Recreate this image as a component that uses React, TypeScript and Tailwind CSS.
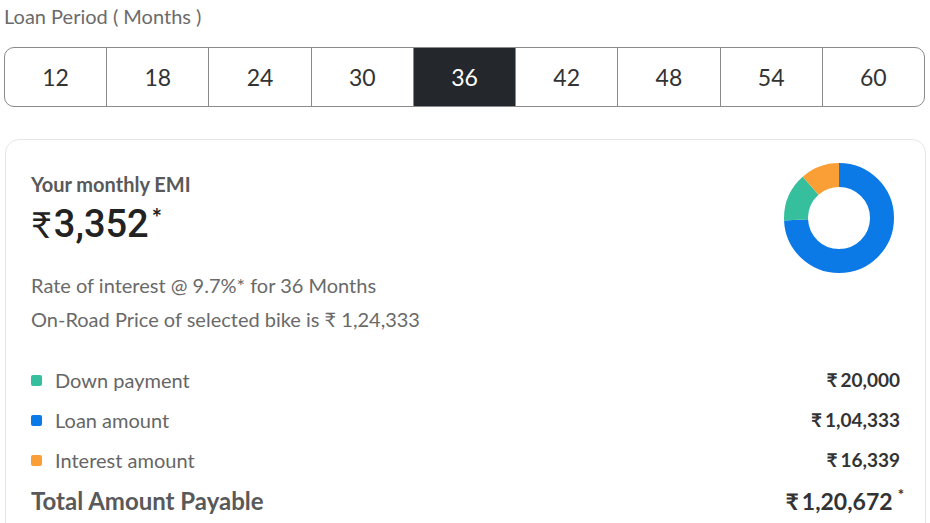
import React from "react";

const months = [12, 18, 24, 30, 36, 42, 48, 54, 60];

const breakdown = [
  { label: "Down payment", value: "20,000", color: "bg-[#35bf9c]" },
  { label: "Loan amount", value: "1,04,333", color: "bg-[#0b79e6]" },
  { label: "Interest amount", value: "16,339", color: "bg-[#fa9f36]" },
];

function Donut() {
  // slices: loan, down payment, interest (clockwise from top)
  const total = 20000 + 104333 + 16339;
  const parts = [
    { v: 104333, c: "#0b79e6" },
    { v: 20000, c: "#35bf9c" },
    { v: 16339, c: "#fa9f36" },
  ];
  const r = 43;
  const circ = 2 * Math.PI * r;
  let acc = 0;
  return (
    <svg width="112" height="112" viewBox="0 0 112 112">
      <g transform="rotate(-90 56 56)">
        {parts.map((p, i) => {
          const len = (p.v / total) * circ;
          const el = (
            <circle
              key={i}
              cx="56"
              cy="56"
              r={r}
              fill="none"
              stroke={p.c}
              strokeWidth="24"
              strokeDasharray={`${len} ${circ - len}`}
              strokeDashoffset={-acc}
            />
          );
          acc += len;
          return el;
        })}
      </g>
    </svg>
  );
}

export default function App() {
  return (
    <div
      className="w-[930px] h-[523px] overflow-hidden bg-white"
      style={{ fontFamily: "Lato, 'Noto Sans', sans-serif" }}
    >
      <div className="pl-[4px] pt-[3px] text-[20px] leading-[26px] text-[#6b6b6b]">
        Loan Period ( Months )
      </div>

      <div className="mx-[4px] mt-[18px] w-[921px] h-[60px] flex border border-[#8a8a8a] rounded-[10px] overflow-hidden">
        {months.map((m, i) => (
          <div
            key={m}
            className={`flex-1 flex items-center justify-center text-[23px] ${
              i > 0 ? "border-l border-[#8a8a8a]" : ""
            } ${m === 36 ? "bg-[#24272b] text-white" : "text-[#333]"}`}
          >
            {m}
          </div>
        ))}
      </div>

      <div className="ml-[5px] mt-[32px] w-[921px] h-[420px] border border-[#e6e6e6] rounded-[14px] px-[25px] pt-[32px]">
        <div className="flex justify-between h-[72px]">
          <div>
            <div className="text-[20px] leading-[24px] font-bold text-[#595959]">
              Your monthly EMI
            </div>
            <div className="flex items-start text-[#222] mt-[6px]">
              <span className="text-[36px] leading-[44px]">₹</span>
              <span
                className="text-[38px] leading-[44px] font-medium ml-[2px]"
                style={{ fontFamily: "Roboto, sans-serif" }}
              >
                3,352
              </span>
              <span className="text-[24px] leading-[24px] mt-[4px] ml-[3px] font-bold">*</span>
            </div>
          </div>
          <div className="-mt-[10px] mr-[5px]">
            <Donut />
          </div>
        </div>

        <div className="mt-[24px] text-[20px] leading-[34px] text-[#6a6a6a]">
          <div>Rate of interest @ 9.7%* for 36 Months</div>
          <div>On-Road Price of selected bike is ₹ 1,24,333</div>
        </div>

        <div className="mt-[32px] flex flex-col gap-[16px]">
          {breakdown.map((b) => (
            <div key={b.label} className="flex items-center justify-between text-[20px] leading-[24px]">
              <div className="flex items-center">
                <span className={`w-[11px] h-[11px] rounded-[2px] ${b.color}`} />
                <span className="ml-[13px] text-[#666]">{b.label}</span>
              </div>
              <span className="font-bold text-[19px] text-[#333]">
                ₹<span className="ml-[3px]">{b.value}</span>
              </span>
            </div>
          ))}
        </div>

        <div className="mt-[15px] flex items-center justify-between">
          <span className="text-[24px] leading-[28px] font-bold text-[#595959]">
            Total Amount Payable
          </span>
          <span className="text-[23px] leading-[28px] font-bold text-[#333] flex items-start -mr-[4px]">
            ₹<span className="ml-[3px]">1,20,672</span>
            <span className="text-[15px] leading-[15px] ml-[5px]">*</span>
          </span>
        </div>
      </div>
    </div>
  );
}
